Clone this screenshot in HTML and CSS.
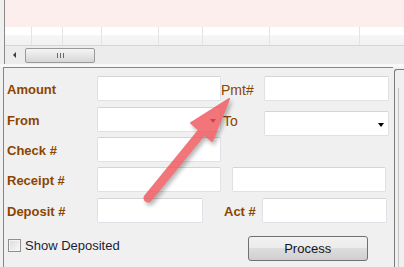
FILE: index.html
```html
<!DOCTYPE html>
<html lang="en">

<head>
    <meta charset="UTF-8">
    <meta name="viewport" content="width=device-width, initial-scale=1.0">
    <title>Deposit</title>
    <link rel="stylesheet" href="styles.css">
</head>

<body>
    <div class="grid">
        <div class="grid-pink"></div>
        <div class="grid-head">
            <div></div><div></div><div></div><div></div><div></div><div></div><div></div>
        </div>
        <div class="hscroll">
            <span class="scroll-left"></span>
            <div class="thumb"><span class="grip"></span></div>
        </div>
    </div>
    <div class="strip"></div>

    <div class="lower">
        <div class="panel">
            <div class="row">
                <label class="lbl">Amount</label>
                <div class="field w124"></div>
                <label class="lbl lbl-mid">Pmt#</label>
                <div class="field w125"></div>
            </div>
            <div class="row">
                <label class="lbl">From</label>
                <div class="field select w124"><span class="caret"></span></div>
                <label class="lbl lbl-mid lbl-to">To</label>
                <div class="field select w125 drop"><span class="caret"></span></div>
            </div>
            <div class="row r1">
                <label class="lbl">Check #</label>
                <div class="field w124"></div>
            </div>
            <div class="row">
                <label class="lbl">Receipt #</label>
                <div class="field w124"></div>
                <div class="field receipt2"></div>
            </div>
            <div class="row r1">
                <label class="lbl">Deposit #</label>
                <div class="field w106"></div>
                <label class="lbl lbl-act">Act #</label>
                <div class="field w125"></div>
            </div>
            <div class="bottom">
                <label class="check"><span class="box"></span>Show Deposited</label>
                <button class="btn">Process</button>
            </div>
        </div>
        <div class="side"><div class="side-inner"></div></div>
    </div>

    <svg class="callout" width="404" height="267" viewBox="0 0 404 267">
        <g class="callout-shape">
            <line x1="148" y1="198" x2="206" y2="127" stroke="#f0575d" stroke-width="9" stroke-linecap="round" />
            <polygon points="229,99 191,123 212,141" fill="#f0575d" stroke="#f0575d" stroke-width="2" stroke-linejoin="round" />
        </g>
    </svg>
</body>

</html>
```

FILE: styles.css
```css
body {
    margin: 0;
    width: 404px;
    height: 267px;
    overflow: hidden;
    background-color: #f0f0f0;
    font-family: "Liberation Sans", Arial, sans-serif;
    position: relative;
}

/* top data grid */
.grid {
    margin-left: 4px;
    border-left: 1px solid #8a8a8a;
    height: 64px;
    background-color: #fff;
}

.grid-pink {
    height: 27px;
    background-color: #fdeeee;
}

.grid-head {
    display: grid;
    grid-template-columns: 27px 31px 39px 57px 44px 67px 90px 1fr;
    height: 18px;
    border-bottom: 1px solid #d6d6d6;
    background: linear-gradient(#fff 0, #fff 8px, #f6f6f7 8px, #f1f1f2 100%);
}

.grid-head>div {
    border-right: 1px solid #e4e4e6;
}

.hscroll {
    display: flex;
    align-items: center;
    height: 18px;
    background-color: #ececec;
}

.scroll-left {
    width: 0;
    height: 0;
    margin-left: 8px;
    border-top: 3px solid transparent;
    border-bottom: 3px solid transparent;
    border-right: 3px solid #3c3c3c;
}

.thumb {
    display: flex;
    justify-content: center;
    align-items: center;
    width: 68px;
    height: 13px;
    margin-left: 9px;
    border: 1px solid #9a9a9a;
    border-radius: 2px;
    background: linear-gradient(#f4f4f4, #e6e6e6 50%, #d6d6d6);
}

.grip {
    width: 7px;
    height: 5px;
    background: repeating-linear-gradient(90deg, #6a6a6a 0, #6a6a6a 1px, transparent 1px, transparent 3px);
}

.strip {
    height: 3px;
    background-color: #f8f8f8;
}

/* form panel */
.lower {
    display: flex;
}

.panel {
    margin-left: 3px;
    width: 389px;
    height: 197px;
    border: 1px solid #858585;
    border-right: none;
    padding-top: 8px;
    box-sizing: content-box;
    background-color: #f0f0f0;
}

.side {
    flex: 1;
    margin-top: 2px;
    margin-left: 1px;
    border-top: 1px solid #7a7a7a;
    border-left: 1px solid #7a7a7a;
    border-bottom: 1px solid #858585;
    border-top-left-radius: 3px;
    display: flex;
}

.side-inner {
    margin: 18px 0 2px 3px;
    border-left: 1px solid #c4c4c4;
    flex: 1;
}

.row {
    display: flex;
    align-items: center;
    height: 25px;
    margin-bottom: 6px;
    padding-left: 3px;
}

.row.r1 {
    margin-bottom: 5px;
}

.row:nth-child(2) {
    margin-bottom: 5px;
}

.lbl {
    width: 90px;
    padding-top: 2px;
    font-size: 13px;
    font-weight: bold;
    color: #8b4500;
}

.lbl-mid {
    width: 43px;
    font-weight: normal;
    font-size: 14px;
}

.lbl-to {
    padding-left: 2px;
    width: 41px;
}

.lbl-act {
    width: 38px;
    margin-left: 21px;
}

.field {
    box-sizing: border-box;
    height: 25px;
    background-color: #fff;
    border: 1px solid #e0e1e6;
    border-top-color: #d3d4d8;
    border-radius: 2px;
    position: relative;
}

.w124 {
    width: 124px;
}

.w125 {
    width: 125px;
}

.w106 {
    width: 106px;
}

.receipt2 {
    width: 154px;
    margin-left: 11px;
}

.drop {
    align-self: flex-start;
    margin-top: 4px;
}

.caret {
    position: absolute;
    right: 4px;
    top: 11px;
    width: 0;
    height: 0;
    border-left: 3px solid transparent;
    border-right: 3px solid transparent;
    border-top: 4px solid #000;
}

.bottom {
    display: flex;
    align-items: flex-start;
    margin-top: 13px;
}

.check {
    display: flex;
    align-items: center;
    margin-top: 2px;
    margin-left: 4px;
    font-size: 13px;
    color: #1c1c3a;
}

.box {
    box-sizing: border-box;
    width: 13px;
    height: 13px;
    margin-right: 4px;
    border: 1px solid #8e8f8f;
    background: linear-gradient(135deg, #dcdcdc, #f8f8f8);
    box-shadow: inset 0 0 0 1px #f4f4f4;
}

.btn {
    width: 120px;
    height: 25px;
    margin-left: 128px;
    border: 1px solid #707070;
    border-radius: 3px;
    background: linear-gradient(#f2f2f2 0, #ebebeb 50%, #dddddd 50%, #cfcfcf 100%);
    font-family: "Liberation Sans", Arial, sans-serif;
    font-size: 13px;
    color: #151515;
    padding: 0;
}

/* red arrow drawn over the form */
.callout {
    position: absolute;
    left: 0;
    top: 0;
    pointer-events: none;
}

.callout-shape {
    opacity: 0.82;
    filter: drop-shadow(2px 3px 2px rgba(0, 0, 0, 0.35));
}
```
